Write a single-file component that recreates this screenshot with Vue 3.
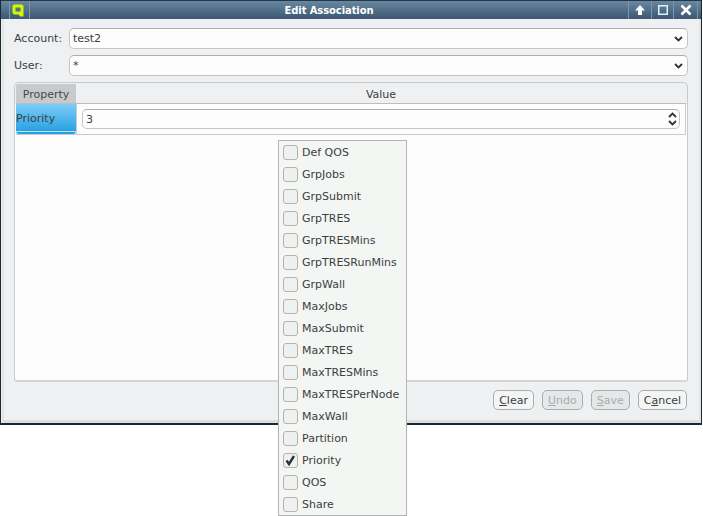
<script setup>
const items = ['Def QOS','GrpJobs','GrpSubmit','GrpTRES','GrpTRESMins','GrpTRESRunMins','GrpWall','MaxJobs','MaxSubmit','MaxTRES','MaxTRESMins','MaxTRESPerNode','MaxWall','Partition','Priority','QOS','Share']
</script>

<template>
  <div class="page">
    <div class="window">
      <div class="titlebar">
        <div class="tb-left">
          <svg class="logo" width="14" height="14" viewBox="0 0 14 14">
            <path d="M3.500 3h7l.5.500v6l-.5.500h-7l-.5-.500v-6z" fill="none" stroke="#d2f800" stroke-width="3"/>
            <path d="M6.500 9.500l3 .500h3v3.500H9z" fill="#d2f800"/>
          </svg>
        </div>
        <div class="tb-title">Edit Association</div>
        <div class="tb-btn w23">
          <svg width="12" height="12" viewBox="0 0 12 12"><path d="M6 1L11 6.500H8V11H4V6.500H1z" fill="#fff"/></svg>
        </div>
        <div class="tb-btn w22">
          <svg width="12" height="12" viewBox="0 0 12 12"><rect x="1.750" y="1.750" width="8.500" height="8.500" fill="none" stroke="#e8edf2" stroke-width="1.500"/></svg>
        </div>
        <div class="tb-btn w24">
          <svg width="12" height="12" viewBox="0 0 12 12"><path d="M1.500 1.500l9 9M10.500 1.500l-9 9" stroke="#fff" stroke-width="2.500"/></svg>
        </div>
      </div>
      <div class="body">
        <div class="form-row">
          <span class="label">Account:</span>
          <div class="combo">
            <span>test2</span>
            <svg width="9" height="6" viewBox="0 0 9 6"><path d="M1 1l3.500 3.500L8 1" fill="none" stroke="#2e3436" stroke-width="1.800"/></svg>
          </div>
        </div>
        <div class="form-row">
          <span class="label">User:</span>
          <div class="combo">
            <span>*</span>
            <svg width="9" height="6" viewBox="0 0 9 6"><path d="M1 1l3.500 3.500L8 1" fill="none" stroke="#2e3436" stroke-width="1.800"/></svg>
          </div>
        </div>
        <div class="table">
          <div class="thead">
            <div class="th-prop">Property</div>
            <div class="th-val">Value</div>
          </div>
          <div class="trow">
            <div class="cell-prop">Priority</div>
            <div class="cell-val">
              <div class="spin">
                <span>3</span>
                <svg width="9" height="14" viewBox="0 0 9 14"><path d="M1 5l3.500-3.500L8 5M1 9l3.500 3.500L8 9" fill="none" stroke="#2e3436" stroke-width="1.800"/></svg>
              </div>
            </div>
          </div>
        </div>
        <div class="actions">
          <button class="btn"><u>C</u>lear</button>
          <button class="btn off"><u>U</u>ndo</button>
          <button class="btn off"><u>S</u>ave</button>
          <button class="btn">C<u>a</u>ncel</button>
        </div>
      </div>
    </div>
    <div class="popup">
      <div v-for="it in items" :key="it" class="item">
        <span class="box">
          <svg v-if="it === 'Priority'" width="13" height="13" viewBox="0 0 13 13"><path d="M2.500 6.500l2.500 3.500 5-8" fill="none" stroke="#2e3436" stroke-width="2.400"/></svg>
        </span>
        <span>{{ it }}</span>
      </div>
    </div>
  </div>
</template>

<style>
html, body { margin: 0; background: #fff; }
</style>

<style scoped>
.page {
  position: relative;
  width: 703px;
  height: 516px;
  overflow: hidden;
  font-family: "DejaVu Sans", sans-serif;
  font-size: 11px;
  color: #3a4042;
}
.window {
  width: 702px;
  height: 425px;
  box-sizing: border-box;
  border: 1px solid #16283a;
  border-top: 0;
  border-bottom-width: 2px;
  background: #eff0f2;
  display: flex;
  flex-direction: column;
}
.titlebar {
  height: 19px;
  box-sizing: border-box;
  border-top: 1px solid #20364b;
  flex: none;
  display: flex;
  align-items: center;
  background: linear-gradient(#6a879f, #3a5773);
  color: #fff;
  font-weight: bold;
  font-size: 10px;
}
.tb-left {
  width: 21px;
  height: 18px;
  display: flex;
  align-items: center;
  justify-content: center;
  margin-left: 8px;
  padding-right: 3px;
  box-sizing: border-box;
  border-left: 1px solid #7d96ac;
  border-right: 1px solid #7d96ac;
}
.logo { display: block; }
.tb-title {
  flex: 1;
  text-align: center;
  letter-spacing: -0.1px;
}
.tb-btn {
  height: 18px;
  display: flex;
  align-items: center;
  justify-content: center;
  box-sizing: border-box;
  border-left: 1px solid #7d96ac;
}
.w23 { width: 23px; }
.w22 { width: 22px; }
.w24 {
  width: 25px;
  border-right: 1px solid #7d96ac;
  margin-right: 3px;
}
.body {
  flex: 1;
  min-height: 0;
  margin: 0 0 0 1px;
  border-left: 2px solid #e4e3dc;
  border-right: 2px solid #e4e3dc;
  border-bottom: 3px solid #dedfdb;
  padding: 9px 11px 0 10px;
  display: flex;
  flex-direction: column;
}
.form-row {
  display: flex;
  align-items: center;
  height: 21px;
  margin-bottom: 6px;
}
.label { width: 55px; flex: none; }
.combo {
  flex: 1;
  height: 21px;
  box-sizing: border-box;
  border: 1px solid #c4c5c5;
  border-top-color: #aeaeae;
  border-radius: 5px;
  background: #fdfdfd;
  display: flex;
  align-items: center;
  justify-content: space-between;
  padding: 0 4px 0 3px;
}
.table {
  height: 300px;
  box-sizing: border-box;
  border: 1px solid #c9cacb;
  border-bottom: 2px solid #d4d5d6;
  border-radius: 5px 5px 3px 3px;
  background: linear-gradient(#eff0f2 21px, #fdfdfd 21px);
  padding: 1px 1px 0;
  display: flex;
  flex-direction: column;
}
.thead {
  height: 20px;
  box-sizing: border-box;
  flex: none;
  display: flex;
  border-bottom: 1px solid #bcbdbd;
}
.th-prop {
  width: 60px;
  background: #c9cacb;
  text-align: center;
  padding-top: 1px;
  line-height: 19px;
  color: #444a4c;
  border-radius: 2px 0 0 0;
}
.th-val {
  flex: 1;
  text-align: center;
  padding-top: 1px;
  line-height: 19px;
}
.trow {
  height: 31px;
  flex: none;
  display: flex;
  border-bottom: 1px solid #c9cacb;
  box-sizing: border-box;
}
.cell-prop {
  width: 60px;
  background: linear-gradient(#7bcdf7, #29a2e2 27px, #b9e3f8 27px, #b9e3f8 28px, #2b9fdc 28px);
  border-radius: 0 0 3px 3px;
  line-height: 30px;
}
.cell-val {
  flex: 1;
  border-left: 1px solid #c9cacb;
  border-right: 1px solid #c9cacb;
  padding: 5px 5px 0 5px;
}
.spin {
  height: 20px;
  box-sizing: border-box;
  border: 1px solid #c4c5c5;
  border-top-color: #aeaeae;
  border-radius: 5px;
  background: #fdfdfd;
  display: flex;
  align-items: center;
  justify-content: space-between;
  padding: 0 2px 0 3px;
}
.actions {
  display: flex;
  justify-content: flex-end;
  gap: 8px;
  margin-top: 8px;
  margin-right: 1px;
}
.btn {
  height: 20px;
  padding: 0 5px;
  box-sizing: border-box;
  border: 1px solid #adadad;
  border-radius: 5px;
  background: #f4f5f5;
  font-family: inherit;
  font-size: 11px;
  color: #3a4042;
}
.btn.off {
  color: #a9acac;
  background: #e6e7e8;
}
.popup {
  position: absolute;
  left: 278px;
  top: 140px;
  width: 129px;
  height: 376px;
  box-sizing: border-box;
  border: 1px solid #b3b5b5;
  background: #f4f6f4;
  padding: 0 0 0 4px;
}
.item {
  height: 22px;
  display: flex;
  align-items: center;
  gap: 4px;
}
.box {
  width: 15px;
  height: 15px;
  box-sizing: border-box;
  border: 1px solid #b2b4b4;
  border-radius: 3px;
  background: #eff0f0;
  display: flex;
  align-items: center;
  justify-content: center;
  flex: none;
}
</style>
